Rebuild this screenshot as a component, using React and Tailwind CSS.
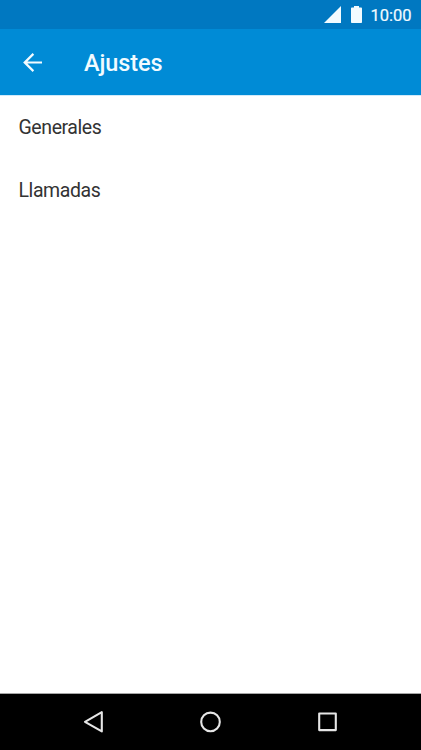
import React from "react";

const items = ["Generales", "Llamadas"];

const StatusBar = () => (
  <div className="flex h-[29px] items-center justify-end bg-[#0078c1] pr-[9.5px] text-[#f2fbff]">
    <svg className="mr-[10px]" width="17" height="17" viewBox="0 0 17 17" fill="currentColor">
      <path d="M17 0v17H0z" />
    </svg>
    <svg className="mr-[8px]" width="11" height="17" viewBox="0 0 11 17" fill="currentColor">
      <path d="M3 0h5v1.6h2.2a.8.8 0 0 1 .8.8v13.8a.8.8 0 0 1-.8.8H.8a.8.8 0 0 1-.8-.8V2.4a.8.8 0 0 1 .8-.8H3z" />
    </svg>
    <span className="mt-[3px] text-[16.5px] leading-none [-webkit-text-stroke:0.2px]">10:00</span>
  </div>
);

const AppBar = ({ title }) => (
  <div className="flex h-[67px] items-center border-b border-[#d0eafa] bg-[#008bd6] pl-[23px] text-[#f2fbff]">
    <button aria-label="Atrás" className="mr-[42px]">
      <svg width="19" height="19" viewBox="4 4 16 16" fill="currentColor">
        <path d="M20 11.1H7.7l5.7-5.7L12.1 4l-8 8 8 8 1.3-1.4L7.7 12.9H20z" />
      </svg>
    </button>
    <h1 className="mt-[4px] text-[23.5px] font-medium leading-none tracking-[-0.1px]">{title}</h1>
  </div>
);

const NavBar = () => (
  <div className="flex h-[56px] items-center bg-black pl-[82px] text-[#e6e6e6]">
    <svg className="mr-[95px]" width="22" height="24" viewBox="0 0 22 24" fill="none" stroke="currentColor" strokeWidth="2.1" strokeLinejoin="round">
      <path d="M19.8 2.2v19.2L3 11.8z" />
    </svg>
    <svg className="mr-[96px]" width="23" height="22" viewBox="0 0 23 22" fill="none" stroke="currentColor" strokeWidth="2.1">
      <circle cx="11.5" cy="10.9" r="9.3" />
    </svg>
    <svg width="20" height="20" viewBox="0 0 20 20" fill="none" stroke="currentColor" strokeWidth="2.1" strokeLinejoin="round">
      <rect x="1.2" y="1.5" width="16.6" height="16.6" />
    </svg>
  </div>
);

export default function App() {
  return (
    <div className="flex h-[750px] w-[421px] flex-col bg-white font-[Roboto,sans-serif]">
      <StatusBar />
      <AppBar title="Ajustes" />
      <ul className="flex-1 border-b border-[#a6a6a6]">
        {items.map((item) => (
          <li key={item} className="flex h-[62.5px] items-center pl-[18.5px] pt-px text-[19.5px] tracking-[-0.42px] text-[#333]">
            {item}
          </li>
        ))}
      </ul>
      <NavBar />
    </div>
  );
}
